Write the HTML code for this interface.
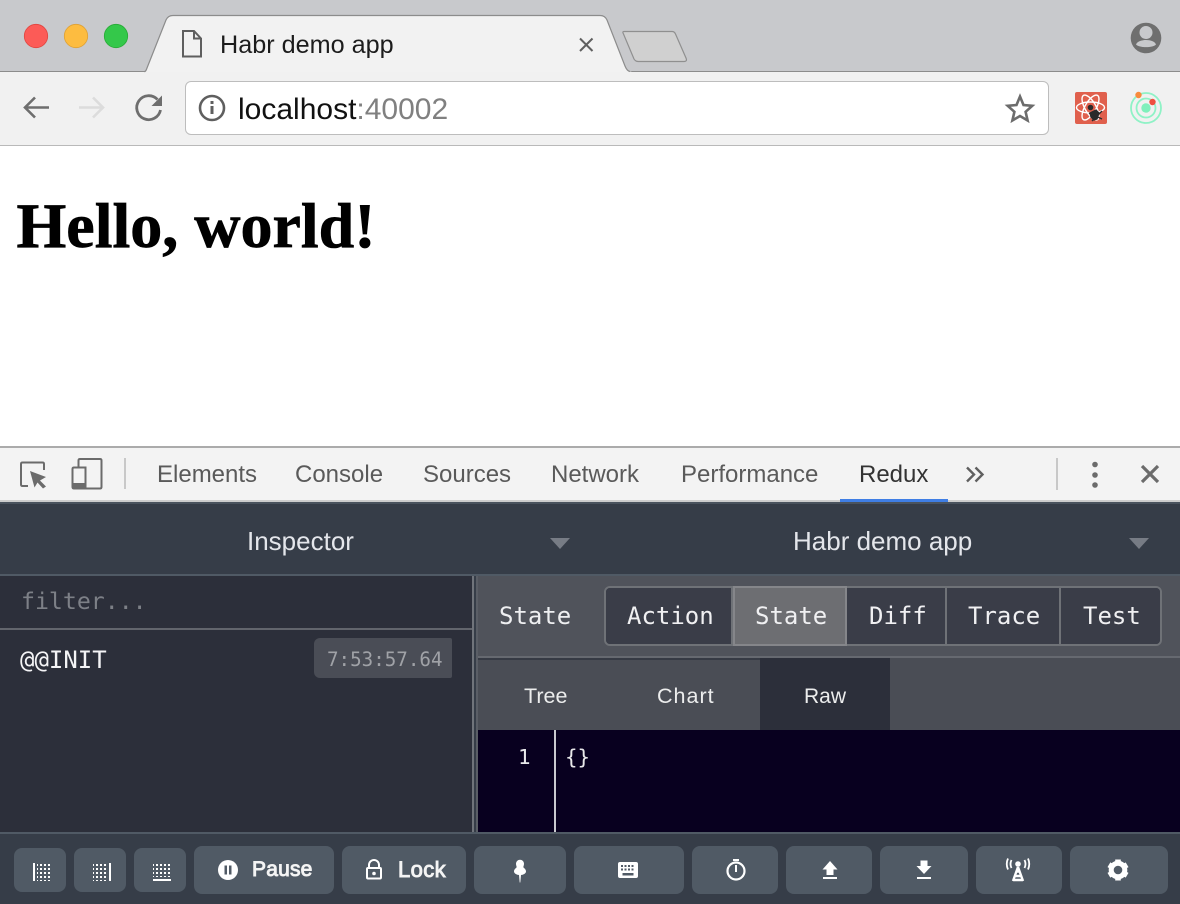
<!DOCTYPE html>
<html><head><meta charset="utf-8">
<style>
html,body{margin:0;padding:0;width:1180px;height:904px;overflow:hidden;background:#fff}
div{position:absolute;box-sizing:border-box}
.t{white-space:nowrap;line-height:1}
.s{font-family:"Liberation Sans",sans-serif}
.m{font-family:"DejaVu Sans Mono",monospace}
.b{background:#505a65;border-radius:8px}
.dt{font-family:"Liberation Sans",sans-serif;font-size:24px;color:#5a5a5a;top:463px}
.seg{top:588px;height:56px;background:#3a3d48;border-right:2px solid #6f7277}
svg{position:absolute;left:0;top:0}
</style></head><body>
<div style="left:0;top:0;width:1180px;height:72px;background:#c8c9cc"></div>
<div style="left:0;top:71px;width:1180px;height:1px;background:#8c8c8c"></div>
<div style="left:0;top:72px;width:1180px;height:73px;background:#f1f1f1"></div>
<div style="left:0;top:145px;width:1180px;height:1px;background:#b9b9b9"></div>

<svg width="1180" height="146" viewBox="0 0 1180 146">
<path d="M144 71.5 L145 71.5 Q146 71 147 68 L166 20 Q168 15.500 173 15.500 L600 15.500 Q605 15.500 607 20 L625 66 Q627 71 630 71.500 L632 72 L144 72Z" fill="#f2f2f2"/>
<path d="M144 71.500 L145 71.500 Q146 71 147 68 L166 20 Q168 15.500 173 15.500 L600 15.500 Q605 15.500 607 20 L625 66 Q627 71 630 71.500" fill="none" stroke="#8c8c8c" stroke-width="1.200"/>
<path d="M624 31.500 Q622 31.500 623.500 34 L634 59 Q635.500 61.500 638 61.500 L684 61.500 Q687.500 61.500 686 58 L675.500 34 Q674.500 31.500 672 31.500Z" fill="#d0d0d0" stroke="#8f8f8f" stroke-width="1.200"/>
<circle cx="36" cy="36" r="11.700" fill="#fc5b57" stroke="#e0443e" stroke-width=".8"/>
<circle cx="76" cy="36" r="11.700" fill="#fdbc40" stroke="#dea034" stroke-width=".8"/>
<circle cx="116" cy="36" r="11.700" fill="#34c84a" stroke="#27aa35" stroke-width=".8"/>
<path d="M183 31 H194 L201 38.500 V56.500 H183Z M194 31 V38.500 H201" fill="none" stroke="#5f5f5f" stroke-width="2"/>
<path d="M580 38.500 L592.500 51 M592.500 38.500 L580 51" stroke="#5f5f5f" stroke-width="2"/>
<path d="M49 107.500 H25 M35 97.500 L25 107.500 L35 117.500" fill="none" stroke="#6e6e6e" stroke-width="2.600"/>
<path d="M79 107.500 H103 M93 97.500 L103 107.500 L93 117.500" fill="none" stroke="#dcdcdc" stroke-width="2.600"/>
<path d="M157.500 99.500 A12 12 0 1 0 160.500 110" fill="none" stroke="#6e6e6e" stroke-width="2.800"/>
<path d="M162 95.500 V106 H151.500Z" fill="#6e6e6e"/>
<rect x="185.500" y="81.500" width="863" height="53" rx="5.500" fill="#fff" stroke="#bdbdbd" stroke-width="1"/>
<circle cx="212" cy="108" r="12" fill="none" stroke="#5f5f5f" stroke-width="2.600"/>
<rect x="210.500" y="106" width="3" height="8" fill="#5f5f5f"/><rect x="210.500" y="101" width="3" height="3" fill="#5f5f5f"/>
<path d="M1020 96.500 L1023.500 105 L1032.300 105.800 L1025.600 111.800 L1027.600 120.500 L1020 116 L1012.400 120.500 L1014.400 111.800 L1007.700 105.800 L1016.500 105Z" fill="none" stroke="#6c6c6c" stroke-width="2.600"/>
<circle cx="1146" cy="38" r="15.300" fill="#6f6f6f"/>
<circle cx="1146" cy="32.500" r="6.500" fill="#c8c9cc"/>
<path d="M1136 44.500 C1138 38.500 1154 38.500 1156 44.500 C1153 48 1139 48 1136 44.500Z" fill="#c8c9cc"/>
<rect x="1075" y="92" width="32" height="32" rx="2" fill="#e0604d"/>
<g fill="none" stroke="#fff" stroke-width="1.400"><ellipse cx="1090.500" cy="107.500" rx="14" ry="5.500"/><ellipse cx="1090.500" cy="107.500" rx="14" ry="5.500" transform="rotate(60 1090.500 107.500)"/><ellipse cx="1090.500" cy="107.500" rx="14" ry="5.500" transform="rotate(120 1090.500 107.500)"/></g>
<circle cx="1090.500" cy="107.500" r="2.800" fill="#2a2a2a"/>
<path d="M1090 113 L1096 110 L1099 113 L1097 119 L1094 120 L1091 117Z M1089 113 L1102 119 M1102 111 L1092 121" fill="#2a2a2a" stroke="#2a2a2a" stroke-width="1.300"/>
<circle cx="1146" cy="108" r="15" fill="none" stroke="#8ff2c6" stroke-width="1.800"/>
<circle cx="1146" cy="108" r="9.500" fill="none" stroke="#8ff2c6" stroke-width="1.800"/>
<circle cx="1146" cy="108" r="4.700" fill="#80f0bc"/>
<circle cx="1138.500" cy="95" r="3.200" fill="#f98b3d"/>
<circle cx="1152.500" cy="102" r="3.200" fill="#ef5040"/>
</svg>

<div class="t s" style="left:220px;top:33px;font-size:25.200px;color:#1c1c1c">Habr demo app</div>
<div class="t s" style="left:238px;top:95px;font-size:30px;color:#111">localhost<span style="color:#808080">:40002</span></div>
<div class="t" style="left:16.500px;top:191px;font:bold 64px/70px 'Liberation Serif',serif;color:#000;-webkit-text-stroke:.7px #000">Hello, world!</div>

<!-- devtools toolbar -->
<div style="left:0;top:446px;width:1180px;height:2px;background:#ababab"></div>
<div style="left:0;top:448px;width:1180px;height:52px;background:#f3f3f3"></div>
<div style="left:0;top:500px;width:1180px;height:2px;background:#cdcdcd"></div>
<div style="left:840px;top:499px;width:108px;height:3px;background:#3f7ee4"></div>
<svg width="1180" height="502" viewBox="0 0 1180 502" style="pointer-events:none">
<path d="M28 486 H22.500 Q21 486 21 484.500 V464 Q21 462.500 22.500 462.500 H42.500 Q44 462.500 44 464 V470" fill="none" stroke="#6b6b6b" stroke-width="2"/>
<path d="M30 471 L46 477 L40 480.500 L46 486.500 L43 488.500 L37.500 482.500 L34.500 487.500Z" fill="#6b6b6b"/>
<path d="M80 459 Q78.500 459 78.500 460.500 V467.500 H74 Q72.500 467.500 72.500 469 V487 Q72.500 488.500 74 488.500 H100 Q101.500 488.500 101.500 487 V460.500 Q101.500 459 100 459Z M78.500 467.500 H85.500 V488" fill="none" stroke="#6b6b6b" stroke-width="2"/>
<rect x="72.500" y="483" width="13" height="5" fill="#6b6b6b"/>
<rect x="124" y="458" width="2" height="31" fill="#c8c8c8"/>
<rect x="1056" y="458" width="2" height="32" fill="#c8c8c8"/>
<path d="M967 467.500 L974 474.500 L967 481.500 M975.500 467.500 L982.500 474.500 L975.500 481.500" fill="none" stroke="#5f5f5f" stroke-width="2.400"/>
<circle cx="1095" cy="464.500" r="2.800" fill="#6b6b6b"/><circle cx="1095" cy="475" r="2.800" fill="#6b6b6b"/><circle cx="1095" cy="485" r="2.800" fill="#6b6b6b"/>
<path d="M1142 466 L1158 482 M1158 466 L1142 482" stroke="#6b6b6b" stroke-width="3.200"/>
</svg>
<div class="t dt" style="left:157px">Elements</div>
<div class="t dt" style="left:295px">Console</div>
<div class="t dt" style="left:423px">Sources</div>
<div class="t dt" style="left:551px">Network</div>
<div class="t dt" style="left:681px">Performance</div>
<div class="t dt" style="left:859px;color:#333">Redux</div>

<!-- inspector top -->
<div style="left:0;top:502px;width:1180px;height:402px;background:#363d48"></div>
<div style="left:0;top:502px;width:1180px;height:2px;background:#4a535e"></div>
<div style="left:0;top:574px;width:1180px;height:2px;background:#505a65"></div>
<div class="t s" style="left:247px;top:528px;font-size:26px;color:#e4e6eb">Inspector</div>
<div class="t s" style="left:793px;top:528px;font-size:26px;color:#e4e6eb">Habr demo app</div>
<div style="left:550px;top:538px;width:0;height:0;border-left:10.500px solid transparent;border-right:10.500px solid transparent;border-top:11px solid #777c85"></div>
<div style="left:1129px;top:538px;width:0;height:0;border-left:10.500px solid transparent;border-right:10.500px solid transparent;border-top:11px solid #777c85"></div>

<!-- left panel -->
<div style="left:0;top:576px;width:472px;height:256px;background:#2c2f3a"></div>
<div style="left:0;top:628px;width:472px;height:2px;background:#62656c"></div>
<div style="left:472px;top:576px;width:2px;height:256px;background:#70747b"></div>
<div style="left:474px;top:576px;width:2px;height:256px;background:#363d48"></div>
<div style="left:476px;top:576px;width:2px;height:256px;background:#5a5e66"></div>
<div class="t m" style="left:21px;top:590px;font-size:23.200px;color:#7d8087">filter...</div>
<div class="t m" style="left:20px;top:648px;font-size:24px;color:#f4f4f6">@@INIT</div>
<div style="left:314px;top:638px;width:138px;height:40px;background:#4a4d56;border-radius:6px 2px 2px 6px"></div>
<div class="t m" style="left:327px;top:650px;font-size:19.200px;color:#a0a2a7">7:53:57.64</div>

<!-- right panel -->
<div style="left:478px;top:576px;width:702px;height:80px;background:#50535b"></div>
<div style="left:478px;top:656px;width:702px;height:2px;background:#666970"></div>
<div class="t m" style="left:499px;top:604px;font-size:24px;color:#eeeff1">State</div>
<div style="left:604px;top:586px;width:558px;height:60px;border:2px solid #6f7277;border-radius:6px;background:#3a3d48"></div>
<div class="seg" style="left:606px;width:127px;border-radius:4px 0 0 4px"></div>
<div class="seg" style="left:733px;width:114px;top:586px;height:60px;background:#6d6e72;border:2px solid #85868a"></div>
<div class="seg" style="left:847px;width:100px"></div>
<div class="seg" style="left:947px;width:114px"></div>
<div class="seg" style="left:1061px;width:99px;border-right:0;border-radius:0 4px 4px 0"></div>
<div class="t m" style="left:627px;top:604px;font-size:24px;color:#f0f0f2">Action</div>
<div class="t m" style="left:755px;top:604px;font-size:24px;color:#f0f0f2">State</div>
<div class="t m" style="left:869px;top:604px;font-size:24px;color:#f0f0f2">Diff</div>
<div class="t m" style="left:968px;top:604px;font-size:24px;color:#f0f0f2">Trace</div>
<div class="t m" style="left:1083px;top:604px;font-size:24px;color:#f0f0f2">Test</div>

<div style="left:478px;top:658px;width:702px;height:72px;background:#4a4d55"></div>
<div style="left:478px;top:658px;width:282px;height:2px;background:#363a44"></div>
<div style="left:760px;top:658px;width:130px;height:72px;background:#2c2f3a"></div>
<div class="t s" style="left:524px;top:686px;font-size:21.500px;color:#eceded">Tree</div>
<div class="t s" style="left:657px;top:686px;font-size:21.500px;letter-spacing:1px;color:#eceded">Chart</div>
<div class="t s" style="left:804px;top:686px;font-size:21px;color:#eceded">Raw</div>

<div style="left:478px;top:730px;width:702px;height:102px;background:#08001f"></div>
<div style="left:554px;top:730px;width:2px;height:102px;background:#c9c9cf"></div>
<div class="t m" style="left:518px;top:747px;font-size:20.800px;color:#e8e8ea">1</div>
<div class="t m" style="left:565px;top:747px;font-size:20.800px;color:#e8e8ea">{}</div>

<!-- footer -->
<div style="left:0;top:832px;width:1180px;height:2px;background:#505a65"></div>
<div class="b" style="left:14px;top:848px;width:52px;height:44px"></div>
<div class="b" style="left:74px;top:848px;width:52px;height:44px"></div>
<div class="b" style="left:134px;top:848px;width:52px;height:44px"></div>
<div class="b" style="left:194px;top:846px;width:140px;height:48px"></div>
<div class="b" style="left:342px;top:846px;width:124px;height:48px"></div>
<div class="b" style="left:474px;top:846px;width:92px;height:48px"></div>
<div class="b" style="left:574px;top:846px;width:110px;height:48px"></div>
<div class="b" style="left:692px;top:846px;width:86px;height:48px"></div>
<div class="b" style="left:786px;top:846px;width:86px;height:48px"></div>
<div class="b" style="left:880px;top:846px;width:88px;height:48px"></div>
<div class="b" style="left:976px;top:846px;width:86px;height:48px"></div>
<div class="b" style="left:1070px;top:846px;width:98px;height:48px"></div>
<div class="t s" style="left:252px;top:859px;font-size:21px;letter-spacing:.2px;color:#f4f4f4;-webkit-text-stroke:.9px #f4f4f4">Pause</div>
<div class="t s" style="left:398px;top:859px;font-size:22px;letter-spacing:.4px;color:#f4f4f4;-webkit-text-stroke:.9px #f4f4f4">Lock</div>
<svg width="1180" height="904" viewBox="0 0 1180 904" style="pointer-events:none">
<defs><pattern id="d" width="4" height="4" patternUnits="userSpaceOnUse"><rect width="2" height="2" fill="#fff"/></pattern></defs>
<rect x="33" y="863" width="2" height="18" fill="#fff"/>
<rect x="37" y="863" width="15" height="18" fill="url(#d)"/>
<rect x="93" y="863" width="15" height="18" fill="url(#d)"/>
<rect x="109" y="863" width="2" height="18" fill="#fff"/>
<rect x="153" y="863" width="19" height="14" fill="url(#d)"/>
<rect x="153" y="879" width="18" height="2" fill="#fff"/>
<circle cx="228" cy="870" r="10" fill="#fff"/>
<rect x="224.500" y="865.500" width="2.500" height="9" fill="#505a65"/><rect x="229" y="865.500" width="2.500" height="9" fill="#505a65"/>
<path d="M369 868 V865 A5 5 0 0 1 379 865 V868" fill="none" stroke="#fff" stroke-width="2"/>
<rect x="367" y="868" width="14" height="10.500" rx="1" fill="none" stroke="#fff" stroke-width="2"/>
<circle cx="374" cy="873.500" r="1.800" fill="#fff"/>
<path d="M516 863.500 A4 3.800 0 0 1 524 863.500 C524 866 523 866.500 523.500 867.500 C524.500 868.500 526 869.500 526 871.500 C526 873.500 523 875 521 875 L520.300 882.500 H519.700 L519 875 C517 875 514 873.500 514 871.500 C514 869.500 515.500 868.500 516.500 867.500 C517 866.500 516 866 516 863.500Z" fill="#fff"/>
<path fill-rule="evenodd" d="M620 862 H636 Q638 862 638 864 V876 Q638 878 636 878 H620 Q618 878 618 876 V864 Q618 862 620 862Z M621 865 V867 H623 V865Z M624.500 865 V867 H626.500 V865Z M628 865 V867 H630 V865Z M631.500 865 V867 H633.500 V865Z M621 868.500 V870.500 H623 V868.500Z M624.500 868.500 V870.500 H626.500 V868.500Z M628 868.500 V870.500 H630 V868.500Z M631.500 868.500 V870.500 H633.500 V868.500Z M622.500 873 V875.500 H633.500 V873Z" fill="#fff"/>
<circle cx="736" cy="871" r="8.500" fill="none" stroke="#fff" stroke-width="2.200"/>
<rect x="733" y="859" width="6" height="2" fill="#fff"/><rect x="735" y="865" width="2" height="7" fill="#fff"/>
<path d="M830 861 L837.500 869.500 H833.500 V875 H826.500 V869.500 H822.500Z" fill="#fff"/><rect x="823" y="877" width="14" height="2" fill="#fff"/>
<path d="M924 874 L916.500 866 H920.500 V860.500 H927.500 V866 H931.500Z" fill="#fff"/><rect x="917" y="877" width="14" height="2" fill="#fff"/>
<circle cx="1018" cy="864" r="2.800" fill="#fff"/>
<path d="M1011.500 860 Q1009.500 864 1011.500 868 M1024.500 860 Q1026.500 864 1024.500 868 M1008 858.500 Q1005.500 864 1008 869.500 M1028 858.500 Q1030.500 864 1028 869.500" fill="none" stroke="#fff" stroke-width="1.800"/>
<path d="M1018 867 L1013 881 M1018 867 L1023 881 M1015 876 H1021 M1013 880 H1023 M1016 871.500 H1020" fill="none" stroke="#fff" stroke-width="2.400"/>
<g transform="translate(1118 870)"><circle r="6.800" fill="none" stroke="#fff" stroke-width="5"/><g fill="#fff"><rect x="-2.800" y="-10.500" width="5.600" height="4"/><rect x="-2.800" y="6.500" width="5.600" height="4"/><rect x="-2.800" y="-10.500" width="5.600" height="4" transform="rotate(60)"/><rect x="-2.800" y="6.500" width="5.600" height="4" transform="rotate(60)"/><rect x="-2.800" y="-10.500" width="5.600" height="4" transform="rotate(120)"/><rect x="-2.800" y="6.500" width="5.600" height="4" transform="rotate(120)"/></g></g>
</svg>
</body></html>
